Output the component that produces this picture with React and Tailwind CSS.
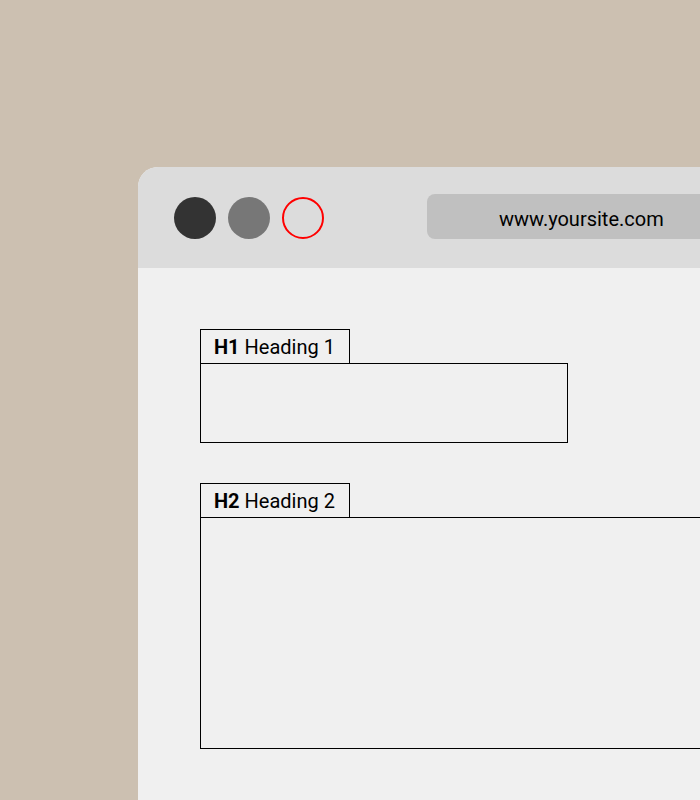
const Tab = ({ level, label }) => (
    <div className="w-[150px] h-[34px] border-t border-x border-black flex items-center pl-[13px] text-[20px] text-black">
        <span className="font-bold">{level}</span>
        <span>&nbsp;{label}</span>
    </div>
);

const App = () => {
    return (
        <div className="w-[700px] h-[800px] overflow-hidden bg-[#ccc0b1] pt-[167px] pl-[138px]" style={{ fontFamily: 'Roboto, "Liberation Sans", sans-serif' }}>
            <div className="w-[640px] h-[700px] rounded-tl-[20px] overflow-hidden bg-[#f0f0f0]">
                <div className="h-[101px] bg-[#dcdcdc] flex items-center pl-[36px]">
                    <div className="flex gap-[12px]">
                        <div className="w-[42px] h-[42px] rounded-full bg-[#333333]"></div>
                        <div className="w-[42px] h-[42px] rounded-full bg-[#777777]"></div>
                        <div className="w-[42px] h-[42px] rounded-full border-2 border-[#ff0000]"></div>
                    </div>
                    <div className="ml-[103px] -mt-[2px] w-[320px] h-[45px] rounded-[8px] bg-[#c0c0c0] flex items-center pl-[72px] pt-[4px] text-[20px] text-black">
                        www.yoursite.com
                    </div>
                </div>
                <div className="pt-[61px] pl-[62px]">
                    <Tab level="H1" label="Heading 1" />
                    <div className="w-[368px] h-[80px] border border-black"></div>
                    <div className="mt-[40px]">
                        <Tab level="H2" label="Heading 2" />
                        <div className="w-[600px] h-[232px] border border-black"></div>
                    </div>
                </div>
            </div>
        </div>
    );
};

export default App;
